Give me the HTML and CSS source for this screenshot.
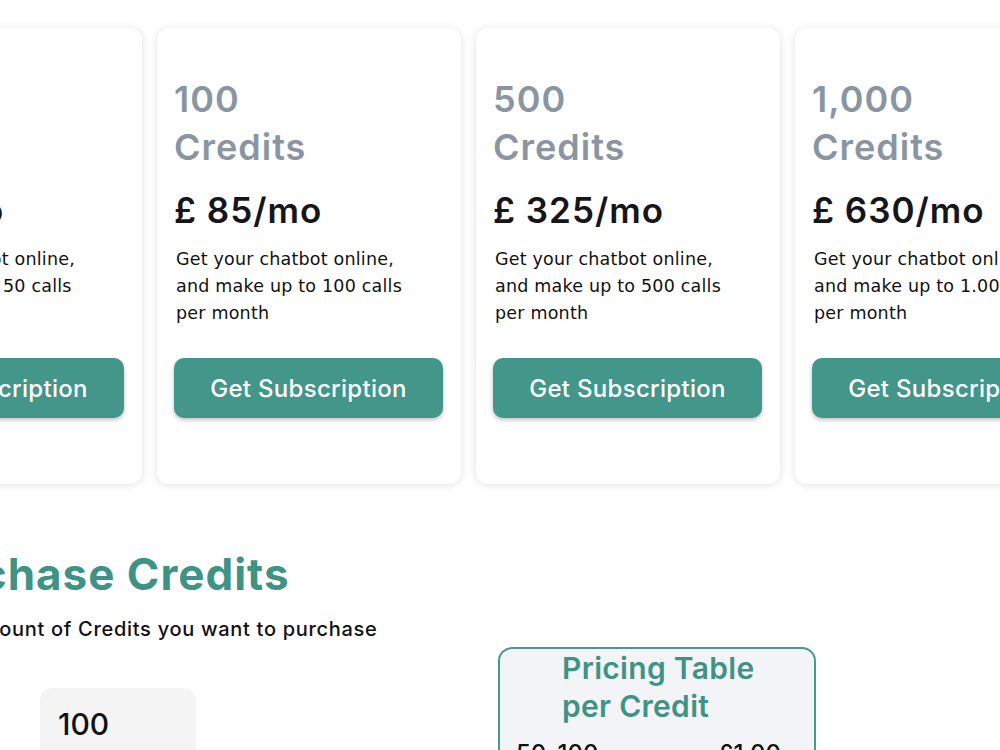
FILE: index.html
```html
<!DOCTYPE html>
<html lang="en">
<head>
    <meta charset="UTF-8">
    <meta name="viewport" content="width=device-width, initial-scale=1.0">
    <title>Credits - Plans</title>
    <link rel="stylesheet" href="styles.css">
</head>
<body>
    <div class="plans">
        <div class="plan-card">
            <h3 class="plan-title">50<br>Credits</h3>
            <div class="plan-price">£ 45/mo</div>
            <p class="plan-text">Get your chatbot online, and make up to 50 calls per month</p>
            <button class="plan-button">Get Subscription</button>
        </div>
        <div class="plan-card">
            <h3 class="plan-title">100<br>Credits</h3>
            <div class="plan-price">£ 85/mo</div>
            <p class="plan-text">Get your chatbot online, and make up to 100 calls per month</p>
            <button class="plan-button">Get Subscription</button>
        </div>
        <div class="plan-card">
            <h3 class="plan-title">500<br>Credits</h3>
            <div class="plan-price">£ 325/mo</div>
            <p class="plan-text">Get your chatbot online, and make up to 500 calls per month</p>
            <button class="plan-button">Get Subscription</button>
        </div>
        <div class="plan-card">
            <h3 class="plan-title">1,000<br>Credits</h3>
            <div class="plan-price">£ 630/mo</div>
            <p class="plan-text">Get your chatbot online, and make up to 1.000 calls per month</p>
            <button class="plan-button">Get Subscription</button>
        </div>
    </div>

    <div class="purchase">
        <h2 class="purchase-title">Purchase Credits</h2>
        <p class="purchase-text">Enter amount of Credits you want to purchase</p>
        <div class="purchase-row">
            <div class="amount-box">
                <input type="text" class="amount-input" value="100">
            </div>
            <div class="pricing-table">
                <h3 class="pricing-title">Pricing Table<br>per Credit</h3>
                <div class="pricing-row"><span>50-100</span><span>£1.00</span></div>
                <div class="pricing-row"><span>100-500</span><span>£0.85</span></div>
            </div>
        </div>
    </div>
</body>
</html>
```

FILE: styles.css
```css
body {
    font-family: Inter, 'Noto Sans', sans-serif;
    margin: 0;
    padding: 28px 0 0;
    background-color: #ffffff;
    color: #111111;
    overflow: hidden;
}
.plans {
    display: flex;
    gap: 15px;
    margin-left: -162px;
}
.plan-card {
    flex: 0 0 304px;
    box-sizing: border-box;
    height: 456px;
    padding: 47px 17px 0;
    background-color: #ffffff;
    border-radius: 12px;
    box-shadow: 0 1px 8px rgba(0, 0, 0, 0.12);
}
.plan-title {
    margin: 0;
    font-size: 36px;
    line-height: 48px;
    font-weight: 600;
    letter-spacing: 1px;
    color: #8a95a2;
}
.plan-price {
    margin-top: 19px;
    font-size: 35px;
    line-height: 40px;
    font-weight: 600;
    letter-spacing: 1px;
    color: #16161a;
}
.plan-text {
    max-width: 245px;
    margin: 16px 0 0 2px;
    font-family: 'DejaVu Sans', sans-serif;
    font-size: 17.5px;
    line-height: 27px;
    letter-spacing: 0.2px;
    color: #111111;
}
.plan-button {
    display: block;
    width: 269px;
    height: 60px;
    margin-top: 31px;
    background-color: #43968a;
    color: #ffffff;
    border: none;
    border-radius: 10px;
    font-family: inherit;
    font-size: 24px;
    font-weight: 500;
    letter-spacing: 0.3px;
    box-shadow: 0 2px 4px rgba(0, 0, 0, 0.25);
    cursor: pointer;
}
.purchase {
    margin-left: -95px;
    margin-top: 64px;
}
.purchase-title {
    margin: 0;
    font-size: 44px;
    line-height: 52px;
    font-weight: 700;
    letter-spacing: 1px;
    color: #3f9385;
}
.purchase-text {
    margin: 15px 0 0 4px;
    font-size: 20px;
    line-height: 28px;
    font-weight: 500;
    letter-spacing: 0.7px;
    color: #111111;
}
.purchase-row {
    display: flex;
    align-items: flex-start;
    margin-top: 4px;
}
.amount-box {
    margin: 41px 0 0 135px;
    width: 156px;
    height: 80px;
    box-sizing: border-box;
    padding: 18px 18px;
    background-color: #f4f4f4;
    border-radius: 12px;
}
.amount-input {
    width: 100%;
    padding: 0;
    border: none;
    outline: none;
    background: transparent;
    font-family: inherit;
    font-size: 30px;
    font-weight: 500;
    color: #111111;
}
.pricing-table {
    margin-left: 302px;
    width: 318px;
    box-sizing: border-box;
    padding: 0 33px 0 16px;
    background-color: #f3f4f8;
    border: 2px solid #4a9a8f;
    border-radius: 14px;
}
.pricing-title {
    margin: 0;
    padding-left: 46px;
    font-size: 30px;
    line-height: 38px;
    font-weight: 600;
    letter-spacing: 0.3px;
    color: #3f9385;
}
.pricing-row {
    display: flex;
    justify-content: space-between;
    margin-top: 14px;
    font-size: 24px;
    font-weight: 500;
}
```
